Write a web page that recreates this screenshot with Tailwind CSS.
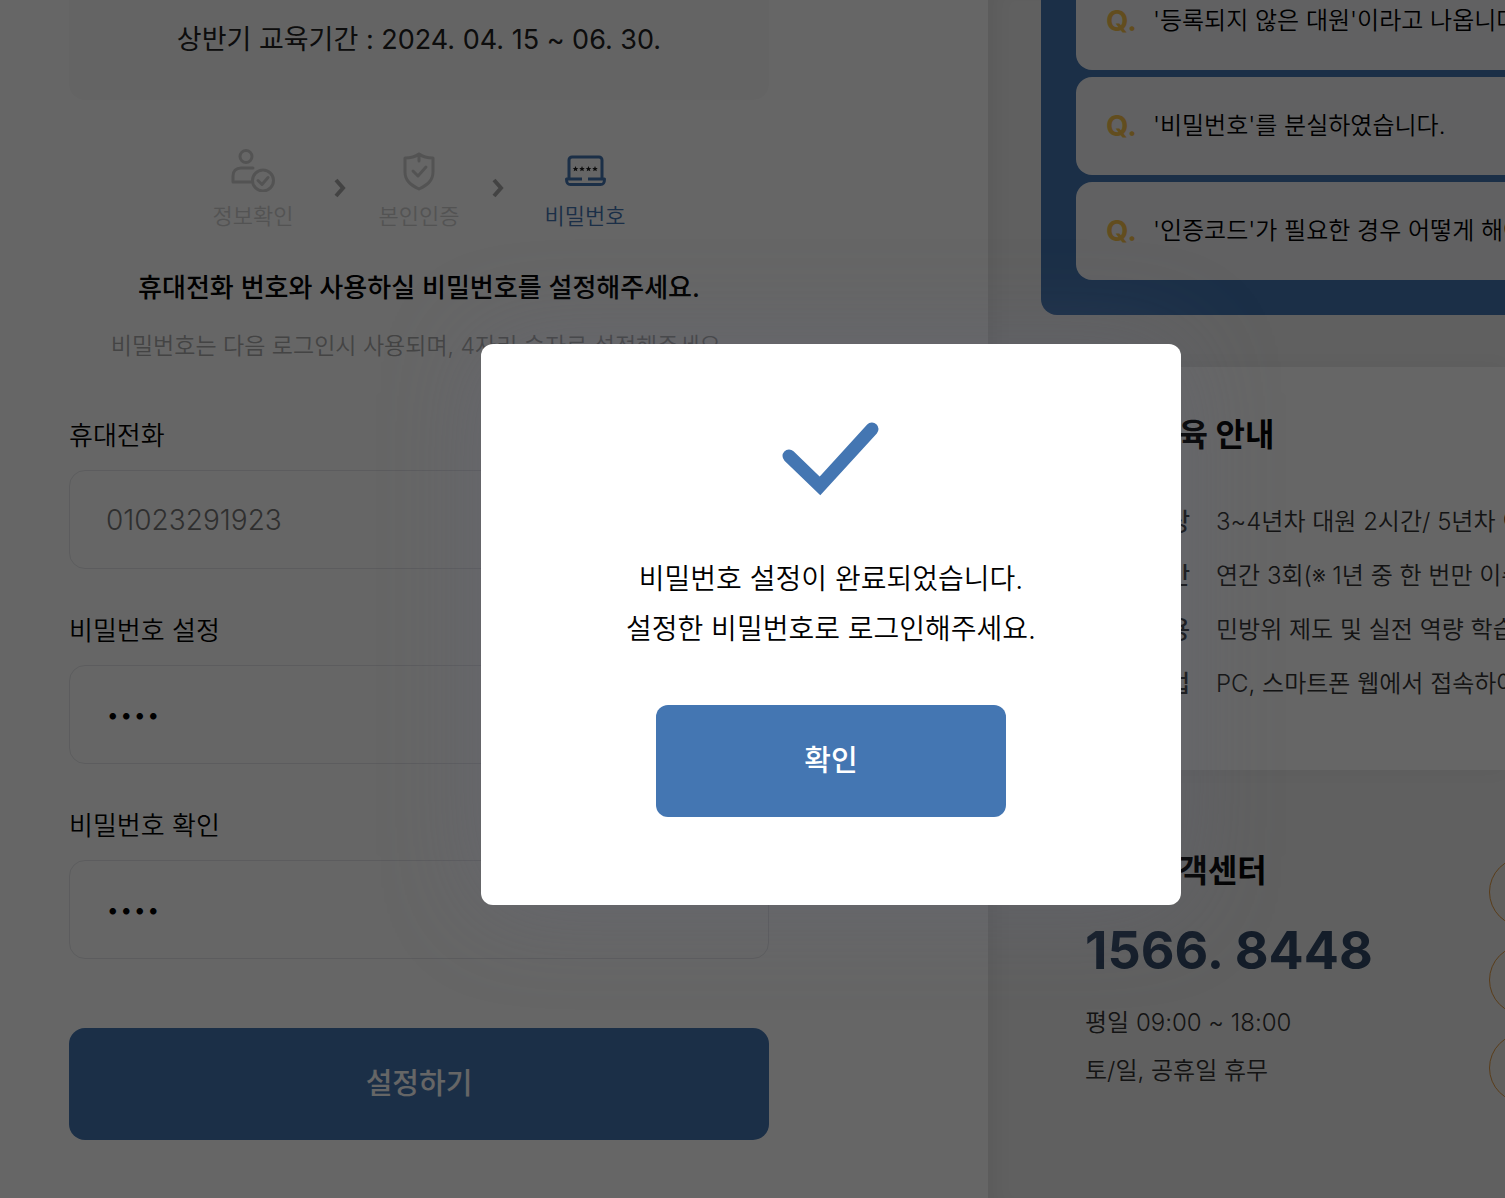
<!DOCTYPE html>
<html lang="ko">
<head>
    <meta charset="UTF-8">
    <meta name="viewport" content="width=device-width, initial-scale=1.0">
    <title>비밀번호 설정</title>
    <script src="https://cdn.jsdelivr.net/npm/@tailwindcss/browser@4"></script>
</head>
<body class="bg-white text-black font-[350] font-['Inter','Noto_Sans_CJK_KR',sans-serif]">

    <div class="relative min-h-screen overflow-hidden grid grid-cols-[988fr_517fr]">

        <!-- 비밀번호 설정 -->
        <main class="pl-[69px] pr-8">
            <div class="max-w-[700px]">
                <div class="h-[100px] pt-5 rounded-b-2xl bg-[#fbfbfb] text-center text-[27px] leading-10 font-normal text-[#222]">
                    상반기 교육기간 : 2024. 04. 15 ~ 06. 30.
                </div>

                <!-- 진행 단계 -->
                <ol class="mt-12 flex items-center justify-center gap-8 text-[22px] leading-8 text-[#d0d0d0] whitespace-nowrap">
                    <li class="w-24 flex flex-col items-center gap-2">
                        <svg class="size-11" viewBox="0 0 44 44" fill="none" stroke="currentColor" stroke-width="3" stroke-linecap="round" stroke-linejoin="round">
                            <circle cx="15" cy="8.500" r="6"/>
                            <path d="M20 34H2v-6c0-5 3-8 8-8h12"/>
                            <circle cx="32" cy="32.500" r="10.500"/>
                            <path d="M27 32.500l4 4 6-7"/>
                        </svg>
                        <span>정보확인</span>
                    </li>
                    <li>
                        <svg class="w-[14px] h-6 text-[#a8a8a8]" viewBox="0 0 14 24" fill="none" stroke="currentColor" stroke-width="4"><path d="M3 2l7 8-7 8"/></svg>
                    </li>
                    <li class="w-20 flex flex-col items-center gap-2">
                        <svg class="size-11" viewBox="0 0 44 44" fill="none" stroke="currentColor" stroke-width="3" stroke-linecap="round" stroke-linejoin="round">
                            <path d="M22 6c-4 3-9 4-14 4v14c0 9 6 13 14 17 8-4 14-8 14-17V10c-5 0-10-1-14-4v7"/>
                            <path d="M16 23l5 5 8-9"/>
                        </svg>
                        <span>본인인증</span>
                    </li>
                    <li>
                        <svg class="w-[14px] h-6 text-[#a8a8a8]" viewBox="0 0 14 24" fill="none" stroke="currentColor" stroke-width="4"><path d="M3 2l7 8-7 8"/></svg>
                    </li>
                    <li class="w-24 flex flex-col items-center gap-2 text-[#4476b2]">
                        <svg class="size-11" viewBox="0 0 44 44" fill="none" stroke="currentColor" stroke-width="3" stroke-linejoin="round">
                            <path d="M6 30V12a3 3 0 0 1 3-3h27a3 3 0 0 1 3 3v18"/>
                            <path d="M19 31H3.500c0 4 1 5.500 4 5.500h30c3 0 4-1.500 4-5.500H25"/>
                            <path fill="#222" stroke="none" d="M12.500 18l.8 1.900 2 .1-1.500 1.300.5 2-1.800-1.100-1.800 1.100.5-2-1.500-1.300 2-.1zM19 18l.8 1.900 2 .1-1.500 1.300.5 2-1.800-1.100-1.800 1.100.5-2-1.500-1.300 2-.1zM25.500 18l.8 1.900 2 .1-1.500 1.300.5 2-1.800-1.100-1.800 1.100.5-2-1.500-1.300 2-.1zM32 18l.8 1.900 2 .1-1.500 1.300.5 2-1.800-1.100-1.800 1.100.5-2-1.500-1.300 2-.1z"/>
                        </svg>
                        <span>비밀번호</span>
                    </li>
                </ol>

                <h1 class="mt-9 text-center text-[26px] leading-10 font-medium whitespace-nowrap">휴대전화 번호와 사용하실 비밀번호를 설정해주세요.</h1>
                <p class="mt-[18px] text-center text-[23px] leading-10 text-[#aaa] whitespace-nowrap">비밀번호는 다음 로그인시 사용되며, 4자리 숫자로 설정해주세요.</p>

                <form class="mt-[54px]">
                    <label for="phone" class="block mb-[18px] text-[26px] leading-8">휴대전화</label>
                    <input id="phone" type="text" value="01023291923" class="block w-full h-[99px] px-9 rounded-2xl border border-[#e6e7ea] bg-white text-[28px] text-[#777]">

                    <label for="password" class="block mt-[46px] mb-[18px] text-[26px] leading-8">비밀번호 설정</label>
                    <input id="password" type="password" value="1234" class="block w-full h-[99px] px-9 rounded-2xl border border-[#e6e7ea] bg-white text-2xl">

                    <label for="password-check" class="block mt-[46px] mb-[18px] text-[26px] leading-8">비밀번호 확인</label>
                    <input id="password-check" type="password" value="1234" class="block w-full h-[99px] px-9 rounded-2xl border border-[#e6e7ea] bg-white text-2xl">

                    <button type="submit" class="mt-[69px] w-full h-28 rounded-2xl bg-[#4476b2] text-[29px] font-medium text-white">설정하기</button>
                </form>
            </div>
        </main>

        <aside class="min-w-0 overflow-hidden whitespace-nowrap bg-[#efefef] shadow-[inset_20px_0_20px_-14px_rgba(0,0,0,0.06)]">
            <!-- 자주 묻는 질문 -->
            <section class="h-[315px] ml-[53px] pl-[35px] pb-[35px] flex flex-col justify-end gap-[7px] overflow-hidden rounded-bl-2xl bg-[#4476b2] text-2xl">
                <a href="#" class="shrink-0 h-[98px] pl-[30px] flex items-center gap-4 rounded-l-2xl bg-[#f2f3f6]">
                    <b class="text-[29px] text-[#f6c14c]">Q.</b>'등록되지 않은 대원'이라고 나옵니다.
                </a>
                <a href="#" class="shrink-0 h-[98px] pl-[30px] flex items-center gap-4 rounded-l-2xl bg-[#f2f3f6]">
                    <b class="text-[29px] text-[#f6c14c]">Q.</b>'비밀번호'를 분실하였습니다.
                </a>
                <a href="#" class="shrink-0 h-[98px] pl-[30px] flex items-center gap-4 rounded-l-2xl bg-[#f2f3f6]">
                    <b class="text-[29px] text-[#f6c14c]">Q.</b>'인증코드'가 필요한 경우 어떻게 해야 하나요?
                </a>
            </section>

            <!-- 교육 안내 -->
            <section class="mt-13 h-[403px] pt-11 pl-[97px] bg-white shadow-[0_0_20px_rgba(0,0,0,0.04)]">
                <h2 class="flex items-center gap-4 text-[32px] leading-12 font-bold">
                    <svg class="size-12" viewBox="0 0 48 48" fill="none" stroke="#4476b2" stroke-width="3"><path d="M8 8h32v32H8zM16 18h16M16 26h16"/></svg>
                    교육 안내
                </h2>
                <dl class="mt-9 grid grid-cols-[105px_1fr] gap-x-[26px] text-2xl leading-[54px] text-[#333]">
                    <dt class="text-right font-medium">교육대상</dt>
                    <dd>3~4년차 대원 2시간/ 5년차 이상 대원 1시간</dd>
                    <dt class="text-right font-medium">교육기간</dt>
                    <dd>연간 3회(※ 1년 중 한 번만 이수)</dd>
                    <dt class="text-right font-medium">교육내용</dt>
                    <dd>민방위 제도 및 실전 역량 학습</dd>
                    <dt class="text-right font-medium">교육방법</dt>
                    <dd>PC, 스마트폰 웹에서 접속하여 수강</dd>
                </dl>
            </section>

            <!-- 고객센터 -->
            <section class="pt-[77px] pl-[97px] flex">
                <div class="w-[404px] shrink-0">
                    <h2 class="flex items-center gap-4 text-[32px] leading-12 font-bold">
                        <svg class="size-12" viewBox="0 0 48 48" fill="none" stroke="#4476b2" stroke-width="3"><path d="M10 28v-6a14 14 0 0 1 28 0v6M10 24v10M38 24v10"/></svg>
                        고객센터
                    </h2>
                    <p class="mt-6 text-[52px] leading-16 font-bold text-[#344a66]">1566. 8448</p>
                    <p class="mt-4 text-2xl leading-12 text-[#333]">평일 09:00 ~ 18:00<br>토/일, 공휴일 휴무</p>
                </div>
                <div class="pt-[10px] flex flex-col gap-[18px]">
                    <a href="#" aria-label="전화 상담" class="size-[70px] rounded-full border border-[#e09840] bg-[#f0ede8]"></a>
                    <a href="#" aria-label="채팅 상담" class="size-[70px] rounded-full border border-[#e09840] bg-[#f0ede8]"></a>
                    <a href="#" aria-label="원격 지원" class="size-[70px] rounded-full border border-[#e09840] bg-[#f0ede8]"></a>
                </div>
            </section>
        </aside>

        <!-- 완료 팝업 -->
        <div class="absolute inset-0 pl-[157px] pt-[51px] flex items-center justify-center bg-black/60">
            <div role="dialog" aria-modal="true" class="w-[700px] max-w-full pt-[78px] pb-22 flex flex-col items-center rounded-xl bg-white shadow-[0_0_100px_rgba(104,106,130,0.3)]">
                <svg class="w-[98px] h-[74px]" viewBox="0 0 98 74" fill="none" stroke="#4476b2" stroke-width="13" stroke-linecap="round"><path d="M7 34l31 30L90 7"/></svg>
                <p class="mt-[58px] text-center text-[28px] leading-[50px]">비밀번호 설정이 완료되었습니다.<br>설정한 비밀번호로 로그인해주세요.</p>
                <button type="button" class="mt-[51px] w-1/2 h-28 rounded-xl bg-[#4476b2] text-[29px] font-medium text-white">확인</button>
            </div>
        </div>
    </div>

</body>
</html>
